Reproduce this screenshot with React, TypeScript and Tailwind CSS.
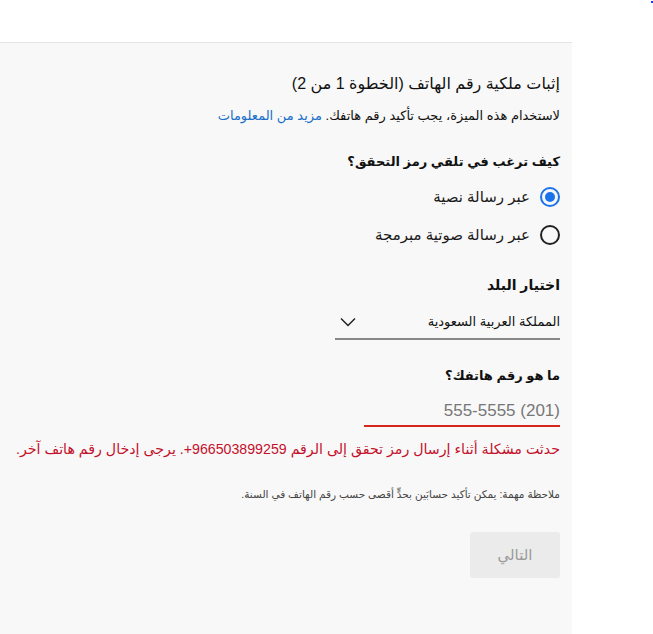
import { useState } from 'react'

const font = { fontFamily: '"Liberation Sans", "DejaVu Sans", sans-serif' }

function Radio({ checked, label, onClick }: { checked: boolean; label: string; onClick: () => void }) {
  return (
    <button type="button" onClick={onClick} className="flex items-center gap-[10px] h-[38px] text-[15px] text-[#1a1a1a]">
      <span
        className={
          checked
            ? 'w-[20px] h-[20px] rounded-full border-2 border-[#1a73e8] flex items-center justify-center'
            : 'w-[20px] h-[20px] rounded-full border-2 border-[#222] flex items-center justify-center'
        }
      >
        {checked && <span className="w-[10px] h-[10px] rounded-full bg-[#1a73e8]" />}
      </span>
      <span>{label}</span>
    </button>
  )
}

export default function App() {
  const [method, setMethod] = useState('sms')

  return (
    <div className="relative w-[653px] h-[634px] bg-white overflow-hidden" style={font}>
      <span className="absolute top-[1px] right-0 w-[2px] h-[2px] bg-[#2233ff]" />
      <div className="h-[42px]" />
      <div dir="rtl" className="w-[572px] h-[592px] bg-[#f8f8f8] border-t border-[#e5e5e5] px-[12px] pt-[30px]">
        <h1 className="text-[16px] leading-[22px] text-[#111]">إثبات ملكية رقم الهاتف (الخطوة 1 من 2)</h1>
        <p className="mt-[12px] text-[13px] leading-[18px] text-[#111]">
          لاستخدام هذه الميزة، يجب تأكيد رقم هاتفك.{' '}
          <a href="#" className="text-[#1a6fc9]">مزيد من المعلومات</a>
        </p>

        <p className="mt-[28px] text-[13px] leading-[18px] text-[#111] font-bold">كيف ترغب في تلقي رمز التحقق؟</p>
        <div className="mt-[7px] flex flex-col items-start">
          <Radio checked={method === 'sms'} label="عبر رسالة نصية" onClick={() => setMethod('sms')} />
          <Radio checked={method === 'voice'} label="عبر رسالة صوتية مبرمجة" onClick={() => setMethod('voice')} />
        </div>

        <p className="mt-[22px] text-[14px] leading-[18px] text-[#111] font-bold">اختيار البلد</p>
        <div className="mt-[18px] w-[225px] h-[28px] border-b-2 border-[#888] flex items-center justify-between pb-[6px]">
          <span className="text-[13px] text-[#111]">المملكة العربية السعودية</span>
          <svg width="16" height="10" viewBox="0 0 16 10" className="ml-[5px]">
            <path d="M1 1.5 L8 8.5 L15 1.5" fill="none" stroke="#222" strokeWidth="1.5" />
          </svg>
        </div>

        <p className="mt-[27px] text-[13px] leading-[18px] text-[#111] font-bold">ما هو رقم هاتفك؟</p>
        <div className="mt-[14px] w-[196px] border-b-2 border-[#d7261b] pb-[2px]">
          <input
            placeholder="(201) 555-5555"
            className="w-full bg-transparent text-right text-[17px] leading-[22px] text-[#111] placeholder:text-[#777] outline-none"
            style={font}
          />
        </div>

        <p className="mt-[12px] text-[14.2px] leading-[20px] text-[#c4102b] whitespace-nowrap">
          حدثت مشكلة أثناء إرسال رمز تحقق إلى الرقم 966503899259+. يرجى إدخال رقم هاتف آخر.
        </p>

        <p className="mt-[27px] text-[10.5px] leading-[16px] text-[#444]">
          ملاحظة مهمة: يمكن تأكيد حسابَين بحدٍّ أقصى حسب رقم الهاتف في السنة.
        </p>

        <div className="mt-[30px] flex">
          <button type="button" disabled className="w-[90px] h-[46px] rounded-[3px] bg-[#ebebeb] text-[15px] text-[#9a9a9a]">
            التالي
          </button>
        </div>
      </div>
    </div>
  )
}
